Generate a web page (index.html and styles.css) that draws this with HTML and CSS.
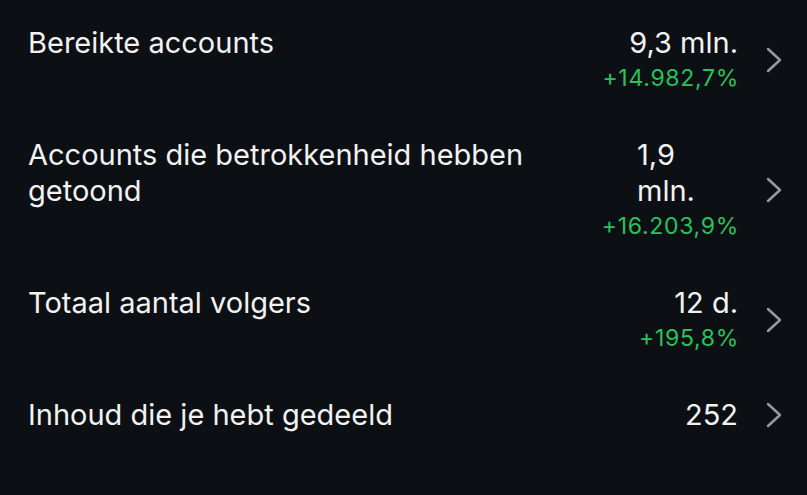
FILE: index.html
```html
<!DOCTYPE html>
<html lang="nl">
<head>
<meta charset="utf-8">
<title>Statistieken</title>
<link rel="stylesheet" href="styles.css">
</head>
<body>
<ul class="list">
  <li class="row">
    <div class="label">Bereikte accounts</div>
    <div class="stats">
      <div class="value">9,3 mln.</div>
      <div class="delta">+14.982,7%</div>
    </div>
    <svg class="chev" viewBox="0 0 16 26" aria-hidden="true"><path d="M2 2 L14 13 L2 24"/></svg>
  </li>
  <li class="row">
    <div class="label">Accounts die betrokkenheid hebben getoond</div>
    <div class="stats">
      <div class="value narrow">1,9 mln.</div>
      <div class="delta">+16.203,9%</div>
    </div>
    <svg class="chev" viewBox="0 0 16 26" aria-hidden="true"><path d="M2 2 L14 13 L2 24"/></svg>
  </li>
  <li class="row">
    <div class="label">Totaal aantal volgers</div>
    <div class="stats">
      <div class="value">12 d.</div>
      <div class="delta">+195,8%</div>
    </div>
    <svg class="chev" viewBox="0 0 16 26" aria-hidden="true"><path d="M2 2 L14 13 L2 24"/></svg>
  </li>
  <li class="row">
    <div class="label">Inhoud die je hebt gedeeld</div>
    <div class="stats">
      <div class="value">252</div>
    </div>
    <svg class="chev" viewBox="0 0 16 26" aria-hidden="true"><path d="M2 2 L14 13 L2 24"/></svg>
  </li>
</ul>
</body>
</html>
```

FILE: styles.css
```css
html, body {
  margin: 0;
  padding: 0;
  background: #0c0f14;
}
body {
  font-family: Inter, "Noto Sans", "Liberation Sans", sans-serif;
  color: #f2f2f2;
  height: 495px;
  overflow: hidden;
}
.list {
  list-style: none;
  margin: 0;
  padding: 4px 25px 0 28px;
}
.row {
  display: flex;
  align-items: center;
  padding: 21px 0;
}
.label {
  flex: 1 1 auto;
  align-self: flex-start;
  font-size: 29px;
  line-height: 36px;
  padding-right: 40px;
}
.stats {
  flex: 0 0 auto;
  display: flex;
  flex-direction: column;
  align-items: flex-end;
}
.value {
  font-size: 29px;
  line-height: 36px;
}
.value.narrow {
  max-width: 101px;
}
.delta {
  font-size: 23px;
  line-height: 34px;
  letter-spacing: 0.7px;
  margin-right: -1px;
  color: #28c35a;
}
.chev {
  flex: 0 0 auto;
  width: 16px;
  height: 26px;
  margin-left: 28px;
}
.chev path {
  fill: none;
  stroke: #98989d;
  stroke-width: 2.5;
  stroke-linecap: round;
  stroke-linejoin: round;
}
```
